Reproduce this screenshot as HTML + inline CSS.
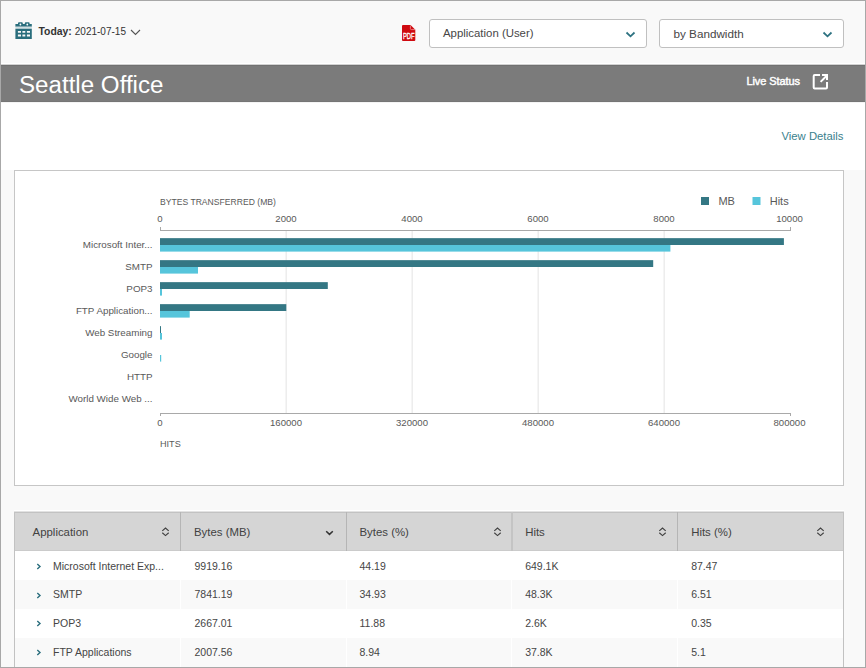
<!DOCTYPE html>
<html><head><meta charset="utf-8">
<style>
*{box-sizing:border-box;margin:0;padding:0}
html,body{width:866px;height:668px;overflow:hidden}
body{position:relative;background:#f9f9f9;font-family:"Liberation Sans",sans-serif;color:#333}
.frame{position:absolute;left:0;top:0;width:866px;height:668px;border:1px solid #a8a8a8;z-index:50;pointer-events:none}
.a{position:absolute;white-space:nowrap;line-height:1}
.band{position:absolute;left:1px;top:65px;width:864px;height:37px;background:#7b7b7b}
.white{position:absolute;left:1px;top:102px;width:864px;height:68px;background:#fff}
.sel{position:absolute;top:19px;height:29px;background:#fff;border:1px solid #c0c0c0;border-radius:3px}
.panel{position:absolute;left:14px;top:170px;width:830px;height:316px;background:#fff;border:1px solid #c6c6c6}
.tbl{position:absolute;left:15px;top:512px;width:829px;height:156px;background:#fff;border:1px solid #c3c3c3;border-bottom:none}
.th{position:absolute;top:0;height:39px;background:#d5d5d5;border-right:1px solid #bdbdbd}
.row{position:absolute;left:0;width:827px;height:29px}
.g{background:#f9f9f9}
.lbl{font-size:9.5px;color:#555}
</style></head>
<body>
<div class="frame"></div>

<!-- top bar -->
<svg class="a" style="left:15px;top:22px" width="17" height="17" viewBox="0 0 17 17">
  <path fill="#2a6e7d" d="M0.4 2 H3 V1.2 Q3 0.2 4 0.2 H6.8 Q7.8 0.2 7.8 1.2 V2 H9.8 V1.2 Q9.8 0.2 10.8 0.2 H13.6 Q14.6 0.2 14.6 1.2 V2 H16.8 V4.7 H0.4 Z"/>
  <circle cx="5.4" cy="2.5" r="0.9" fill="#fff"/>
  <circle cx="12.3" cy="2.5" r="0.9" fill="#fff"/>
  <rect x="0.4" y="4.7" width="16.4" height="2" fill="#cfdfe2"/>
  <path fill="#2a6e7d" fill-rule="evenodd" d="M0.4 6.7 H16.8 V17 H0.4 Z M2.9 8.9 V10.8 H6 V8.9 Z M7.4 8.9 V10.8 H10.3 V8.9 Z M11.9 8.9 V10.8 H15 V8.9 Z M2.9 12.5 V14.4 H6 V12.5 Z M7.4 12.5 V14.4 H10.3 V12.5 Z M11.9 12.5 V14.4 H15 V12.5 Z"/>
</svg>
<div class="a" style="left:38.5px;top:27px;font-size:10.4px;color:#333"><b>Today:</b><span style="font-size:10px;margin-left:3px">2021-07-15</span></div>
<svg class="a" style="left:130px;top:29px" width="11" height="7" viewBox="0 0 11 7"><path d="M1 1 L5.5 5.5 L10 1" fill="none" stroke="#555" stroke-width="1.1"/></svg>

<svg class="a" style="left:402px;top:25px" width="14" height="16" viewBox="0 0 14 16">
  <path fill="#cf0a10" d="M1 0 H8.6 L13.3 4.7 V15 Q13.3 16 12.3 16 H1 Q0 16 0 15 V1 Q0 0 1 0 Z"/>
  <path fill="none" stroke="#f2a9ab" stroke-width="0.7" d="M8.4 0.4 V3.6 Q8.4 4.6 9.4 4.6 H13"/>
  <text transform="translate(6.75,14.1) scale(1,1.45)" font-family="Liberation Sans" font-size="6.4" fill="#fff" text-anchor="middle" textLength="11.6" lengthAdjust="spacingAndGlyphs" stroke="#fff" stroke-width="0.25">PDF</text>
</svg>

<div class="sel" style="left:429px;width:218px"></div>
<div class="a" style="left:443px;top:27.9px;font-size:11.4px;color:#474747">Application (User)</div>
<svg class="a" style="left:625px;top:31px" width="11" height="7" viewBox="0 0 11 7"><path d="M1.5 1.5 L5.5 5.3 L9.5 1.5" fill="none" stroke="#2d7281" stroke-width="1.75"/></svg>

<div class="sel" style="left:659px;width:185px"></div>
<div class="a" style="left:673.5px;top:27.7px;font-size:11.7px;color:#474747">by Bandwidth</div>
<svg class="a" style="left:822px;top:31px" width="11" height="7" viewBox="0 0 11 7"><path d="M1.5 1.5 L5.5 5.3 L9.5 1.5" fill="none" stroke="#2d7281" stroke-width="1.75"/></svg>

<!-- band -->
<div class="band"></div>
<div class="a" style="left:1px;top:63px;width:864px;height:1px;background:#fff"></div>
<div class="a" style="left:1px;top:64px;width:864px;height:1px;background:#d2d2d2"></div>
<div class="a" style="left:1px;top:65px;width:864px;height:1px;background:#717171"></div>
<div class="a" style="left:1px;top:101px;width:864px;height:1px;background:#757575"></div>
<div class="a" style="left:1px;top:102px;width:864px;height:1px;background:#f4f4f4;z-index:2"></div>
<div class="a" style="left:19px;top:72.6px;font-size:24.15px;color:#fff">Seattle Office</div>
<div class="a" style="left:746.5px;top:76.3px;font-size:11px;color:#fff;-webkit-text-stroke:0.45px #fff;letter-spacing:-0.1px">Live Status</div>
<svg class="a" style="left:812px;top:73px" width="18" height="18" viewBox="0 0 18 18">
  <path d="M8 2 H2.7 Q1.7 2 1.7 3 V14.6 Q1.7 15.6 2.7 15.6 H14 Q15 15.6 15 14.6 V9" fill="none" stroke="#fff" stroke-width="2"/>
  <path d="M8.6 8.9 L14.2 3.2" fill="none" stroke="#fff" stroke-width="2"/>
  <path d="M10 2 H15 V7" fill="none" stroke="#fff" stroke-width="2"/>
</svg>

<div class="white"></div>
<div class="a" style="left:781.5px;top:130.5px;font-size:11.3px;color:#3b7f8d">View Details</div>

<!-- chart panel -->
<div class="panel"></div>
<div id="chart"><svg class="a" style="left:0;top:0" width="866" height="668" viewBox="0 0 866 668">
<rect x="285.64" y="231" width="1" height="182" fill="#e4e4e4"/>
<rect x="411.64" y="231" width="1" height="182" fill="#e4e4e4"/>
<rect x="537.64" y="231" width="1" height="182" fill="#e4e4e4"/>
<rect x="663.64" y="231" width="1" height="182" fill="#e4e4e4"/>
<rect x="160" y="230" width="631" height="1" fill="#a9a9a9"/>
<rect x="160" y="227" width="1" height="3" fill="#a9a9a9"/>
<rect x="790" y="227" width="1" height="3" fill="#a9a9a9"/>
<rect x="160" y="413" width="631" height="1" fill="#a9a9a9"/>
<rect x="160" y="414" width="1" height="2" fill="#a9a9a9"/>
<rect x="790" y="414" width="1" height="2" fill="#a9a9a9"/>
<text x="160" y="222" font-family="Liberation Sans" font-size="9.6" fill="#595959" text-anchor="middle">0</text>
<text x="160" y="426" font-family="Liberation Sans" font-size="9.6" fill="#595959" text-anchor="middle">0</text>
<text x="286" y="222" font-family="Liberation Sans" font-size="9.6" fill="#595959" text-anchor="middle">2000</text>
<text x="286" y="426" font-family="Liberation Sans" font-size="9.6" fill="#595959" text-anchor="middle">160000</text>
<text x="412" y="222" font-family="Liberation Sans" font-size="9.6" fill="#595959" text-anchor="middle">4000</text>
<text x="412" y="426" font-family="Liberation Sans" font-size="9.6" fill="#595959" text-anchor="middle">320000</text>
<text x="538" y="222" font-family="Liberation Sans" font-size="9.6" fill="#595959" text-anchor="middle">6000</text>
<text x="538" y="426" font-family="Liberation Sans" font-size="9.6" fill="#595959" text-anchor="middle">480000</text>
<text x="664" y="222" font-family="Liberation Sans" font-size="9.6" fill="#595959" text-anchor="middle">8000</text>
<text x="664" y="426" font-family="Liberation Sans" font-size="9.6" fill="#595959" text-anchor="middle">640000</text>
<text x="789.5" y="222" font-family="Liberation Sans" font-size="9.6" fill="#595959" text-anchor="middle">10000</text>
<text x="789.5" y="426" font-family="Liberation Sans" font-size="9.6" fill="#595959" text-anchor="middle">800000</text>
<text transform="translate(160,205) scale(1,1.12)" font-family="Liberation Sans" font-size="8.6" fill="#595959">BYTES TRANSFERRED (MB)</text>
<text transform="translate(160,447) scale(1,1.08)" font-family="Liberation Sans" font-size="9.1" fill="#595959">HITS</text>
<rect x="701" y="197" width="8" height="8" fill="#347784"/>
<text x="718.4" y="205" font-family="Liberation Sans" font-size="11" fill="#595959">MB</text>
<rect x="752.5" y="197" width="8" height="8" fill="#56c5db"/>
<text x="769.7" y="205" font-family="Liberation Sans" font-size="11" fill="#595959">Hits</text>
<text x="152.5" y="248.3" font-family="Liberation Sans" font-size="9.8" fill="#595959" text-anchor="end">Microsoft Inter...</text>
<rect x="160" y="238.15" width="623.9" height="6.85" fill="#347784"/>
<rect x="160" y="245.0" width="510.4" height="6.6" fill="#56c5db"/>
<text x="152.5" y="270.3" font-family="Liberation Sans" font-size="9.8" fill="#595959" text-anchor="end">SMTP</text>
<rect x="160" y="260.15" width="493.2" height="6.85" fill="#347784"/>
<rect x="160" y="267.0" width="38.0" height="6.6" fill="#56c5db"/>
<text x="152.5" y="292.3" font-family="Liberation Sans" font-size="9.8" fill="#595959" text-anchor="end">POP3</text>
<rect x="160" y="282.15" width="167.8" height="6.85" fill="#347784"/>
<rect x="160" y="289.0" width="2.0" height="6.6" fill="#56c5db"/>
<text x="152.5" y="314.3" font-family="Liberation Sans" font-size="9.8" fill="#595959" text-anchor="end">FTP Application...</text>
<rect x="160" y="304.15" width="126.3" height="6.85" fill="#347784"/>
<rect x="160" y="311.0" width="29.7" height="6.6" fill="#56c5db"/>
<text x="152.5" y="336.3" font-family="Liberation Sans" font-size="9.8" fill="#595959" text-anchor="end">Web Streaming</text>
<rect x="160" y="326.15" width="1.0" height="6.85" fill="#347784"/>
<rect x="160" y="333.0" width="2.0" height="6.6" fill="#56c5db"/>
<text x="152.5" y="358.3" font-family="Liberation Sans" font-size="9.8" fill="#595959" text-anchor="end">Google</text>
<rect x="160" y="355.0" width="1.2" height="6.6" fill="#56c5db"/>
<text x="152.5" y="380.3" font-family="Liberation Sans" font-size="9.8" fill="#595959" text-anchor="end">HTTP</text>
<text x="152.5" y="402.3" font-family="Liberation Sans" font-size="9.8" fill="#595959" text-anchor="end">World Wide Web ...</text>
</svg></div>

<!-- table -->
<div id="tbl"><div style="position:absolute;left:14px;top:510px;width:830px;height:1px;background:#fff"></div><div style="position:absolute;left:14px;top:511px;width:830px;height:1px;background:#e2e2e2;z-index:1"></div>
<div style="position:absolute;left:14px;top:512px;width:830px;height:156px;background:#fff;border:1px solid #c2c2c2;border-bottom:none"></div>
<div style="position:absolute;left:15px;top:513px;width:828px;height:37px;background:#d5d5d5"></div>
<div style="position:absolute;left:15px;top:550px;width:828px;height:1px;background:#cbcbcb"></div>
<div style="position:absolute;left:180.0px;top:512px;width:1px;height:39px;background:#b5b5b5"></div>
<div style="position:absolute;left:346.0px;top:512px;width:1px;height:39px;background:#b5b5b5"></div>
<div style="position:absolute;left:511px;top:512px;width:2px;height:39px;background:#c4c4c4"></div>
<div style="position:absolute;left:677.0px;top:512px;width:1px;height:39px;background:#b5b5b5"></div>
<div style="position:absolute;left:15px;top:580px;width:828px;height:29px;background:#f9f9f9"></div>
<div style="position:absolute;left:180px;top:580px;width:1px;height:29px;background:#ffffff"></div>
<div style="position:absolute;left:346px;top:580px;width:1px;height:29px;background:#ffffff"></div>
<div style="position:absolute;left:511px;top:580px;width:1px;height:29px;background:#ffffff"></div>
<div style="position:absolute;left:677px;top:580px;width:1px;height:29px;background:#ffffff"></div>
<div style="position:absolute;left:15px;top:638px;width:828px;height:29px;background:#f9f9f9"></div>
<div style="position:absolute;left:180px;top:638px;width:1px;height:29px;background:#ffffff"></div>
<div style="position:absolute;left:346px;top:638px;width:1px;height:29px;background:#ffffff"></div>
<div style="position:absolute;left:511px;top:638px;width:1px;height:29px;background:#ffffff"></div>
<div style="position:absolute;left:677px;top:638px;width:1px;height:29px;background:#ffffff"></div>
<div class="a" style="left:32.6px;top:526.6px;font-size:11.4px;color:#424242">Application</div>
<div class="a" style="left:194px;top:526.6px;font-size:11.4px;color:#424242">Bytes (MB)</div>
<div class="a" style="left:359.5px;top:526.6px;font-size:11.4px;color:#424242">Bytes (%)</div>
<div class="a" style="left:525.2px;top:526.6px;font-size:11.4px;color:#424242">Hits</div>
<div class="a" style="left:691.2px;top:526.6px;font-size:11.4px;color:#424242">Hits (%)</div>
<svg class="a" style="left:161.2px;top:526px" width="9" height="11" viewBox="0 0 9 11"><path d="M1.3 4.9 L4.5 2 L7.7 4.9 M1.3 6.8 L4.5 9.6 L7.7 6.8" fill="none" stroke="#404040" stroke-width="1.15"/></svg>
<svg class="a" style="left:492.5px;top:526px" width="9" height="11" viewBox="0 0 9 11"><path d="M1.3 4.9 L4.5 2 L7.7 4.9 M1.3 6.8 L4.5 9.6 L7.7 6.8" fill="none" stroke="#404040" stroke-width="1.15"/></svg>
<svg class="a" style="left:658.2px;top:526px" width="9" height="11" viewBox="0 0 9 11"><path d="M1.3 4.9 L4.5 2 L7.7 4.9 M1.3 6.8 L4.5 9.6 L7.7 6.8" fill="none" stroke="#404040" stroke-width="1.15"/></svg>
<svg class="a" style="left:816px;top:526px" width="9" height="11" viewBox="0 0 9 11"><path d="M1.3 4.9 L4.5 2 L7.7 4.9 M1.3 6.8 L4.5 9.6 L7.7 6.8" fill="none" stroke="#404040" stroke-width="1.15"/></svg>
<svg class="a" style="left:325px;top:530px" width="9" height="6" viewBox="0 0 9 6"><path d="M1.2 1.2 L4.5 4.4 L7.8 1.2" fill="none" stroke="#333" stroke-width="1.5"/></svg>
<svg class="a" style="left:36px;top:563.0px" width="6" height="7" viewBox="0 0 6 7"><path d="M1.3 1 L4 3.5 L1.3 6" fill="none" stroke="#2a6e7d" stroke-width="1.4"/></svg>
<div class="a" style="left:53px;top:560.6px;font-size:10.5px;color:#454545">Microsoft Internet Exp...</div>
<div class="a" style="left:194.5px;top:560.6px;font-size:10.5px;color:#454545">9919.16</div>
<div class="a" style="left:359.5px;top:560.6px;font-size:10.5px;color:#454545">44.19</div>
<div class="a" style="left:525.2px;top:560.6px;font-size:10.5px;color:#454545">649.1K</div>
<div class="a" style="left:691.2px;top:560.6px;font-size:10.5px;color:#454545">87.47</div>
<svg class="a" style="left:36px;top:591.7px" width="6" height="7" viewBox="0 0 6 7"><path d="M1.3 1 L4 3.5 L1.3 6" fill="none" stroke="#2a6e7d" stroke-width="1.4"/></svg>
<div class="a" style="left:53px;top:589.3px;font-size:10.5px;color:#454545">SMTP</div>
<div class="a" style="left:194.5px;top:589.3px;font-size:10.5px;color:#454545">7841.19</div>
<div class="a" style="left:359.5px;top:589.3px;font-size:10.5px;color:#454545">34.93</div>
<div class="a" style="left:525.2px;top:589.3px;font-size:10.5px;color:#454545">48.3K</div>
<div class="a" style="left:691.2px;top:589.3px;font-size:10.5px;color:#454545">6.51</div>
<svg class="a" style="left:36px;top:620.4px" width="6" height="7" viewBox="0 0 6 7"><path d="M1.3 1 L4 3.5 L1.3 6" fill="none" stroke="#2a6e7d" stroke-width="1.4"/></svg>
<div class="a" style="left:53px;top:618.0px;font-size:10.5px;color:#454545">POP3</div>
<div class="a" style="left:194.5px;top:618.0px;font-size:10.5px;color:#454545">2667.01</div>
<div class="a" style="left:359.5px;top:618.0px;font-size:10.5px;color:#454545">11.88</div>
<div class="a" style="left:525.2px;top:618.0px;font-size:10.5px;color:#454545">2.6K</div>
<div class="a" style="left:691.2px;top:618.0px;font-size:10.5px;color:#454545">0.35</div>
<svg class="a" style="left:36px;top:649.1px" width="6" height="7" viewBox="0 0 6 7"><path d="M1.3 1 L4 3.5 L1.3 6" fill="none" stroke="#2a6e7d" stroke-width="1.4"/></svg>
<div class="a" style="left:53px;top:646.7px;font-size:10.5px;color:#454545">FTP Applications</div>
<div class="a" style="left:194.5px;top:646.7px;font-size:10.5px;color:#454545">2007.56</div>
<div class="a" style="left:359.5px;top:646.7px;font-size:10.5px;color:#454545">8.94</div>
<div class="a" style="left:525.2px;top:646.7px;font-size:10.5px;color:#454545">37.8K</div>
<div class="a" style="left:691.2px;top:646.7px;font-size:10.5px;color:#454545">5.1</div></div>

</body></html>
